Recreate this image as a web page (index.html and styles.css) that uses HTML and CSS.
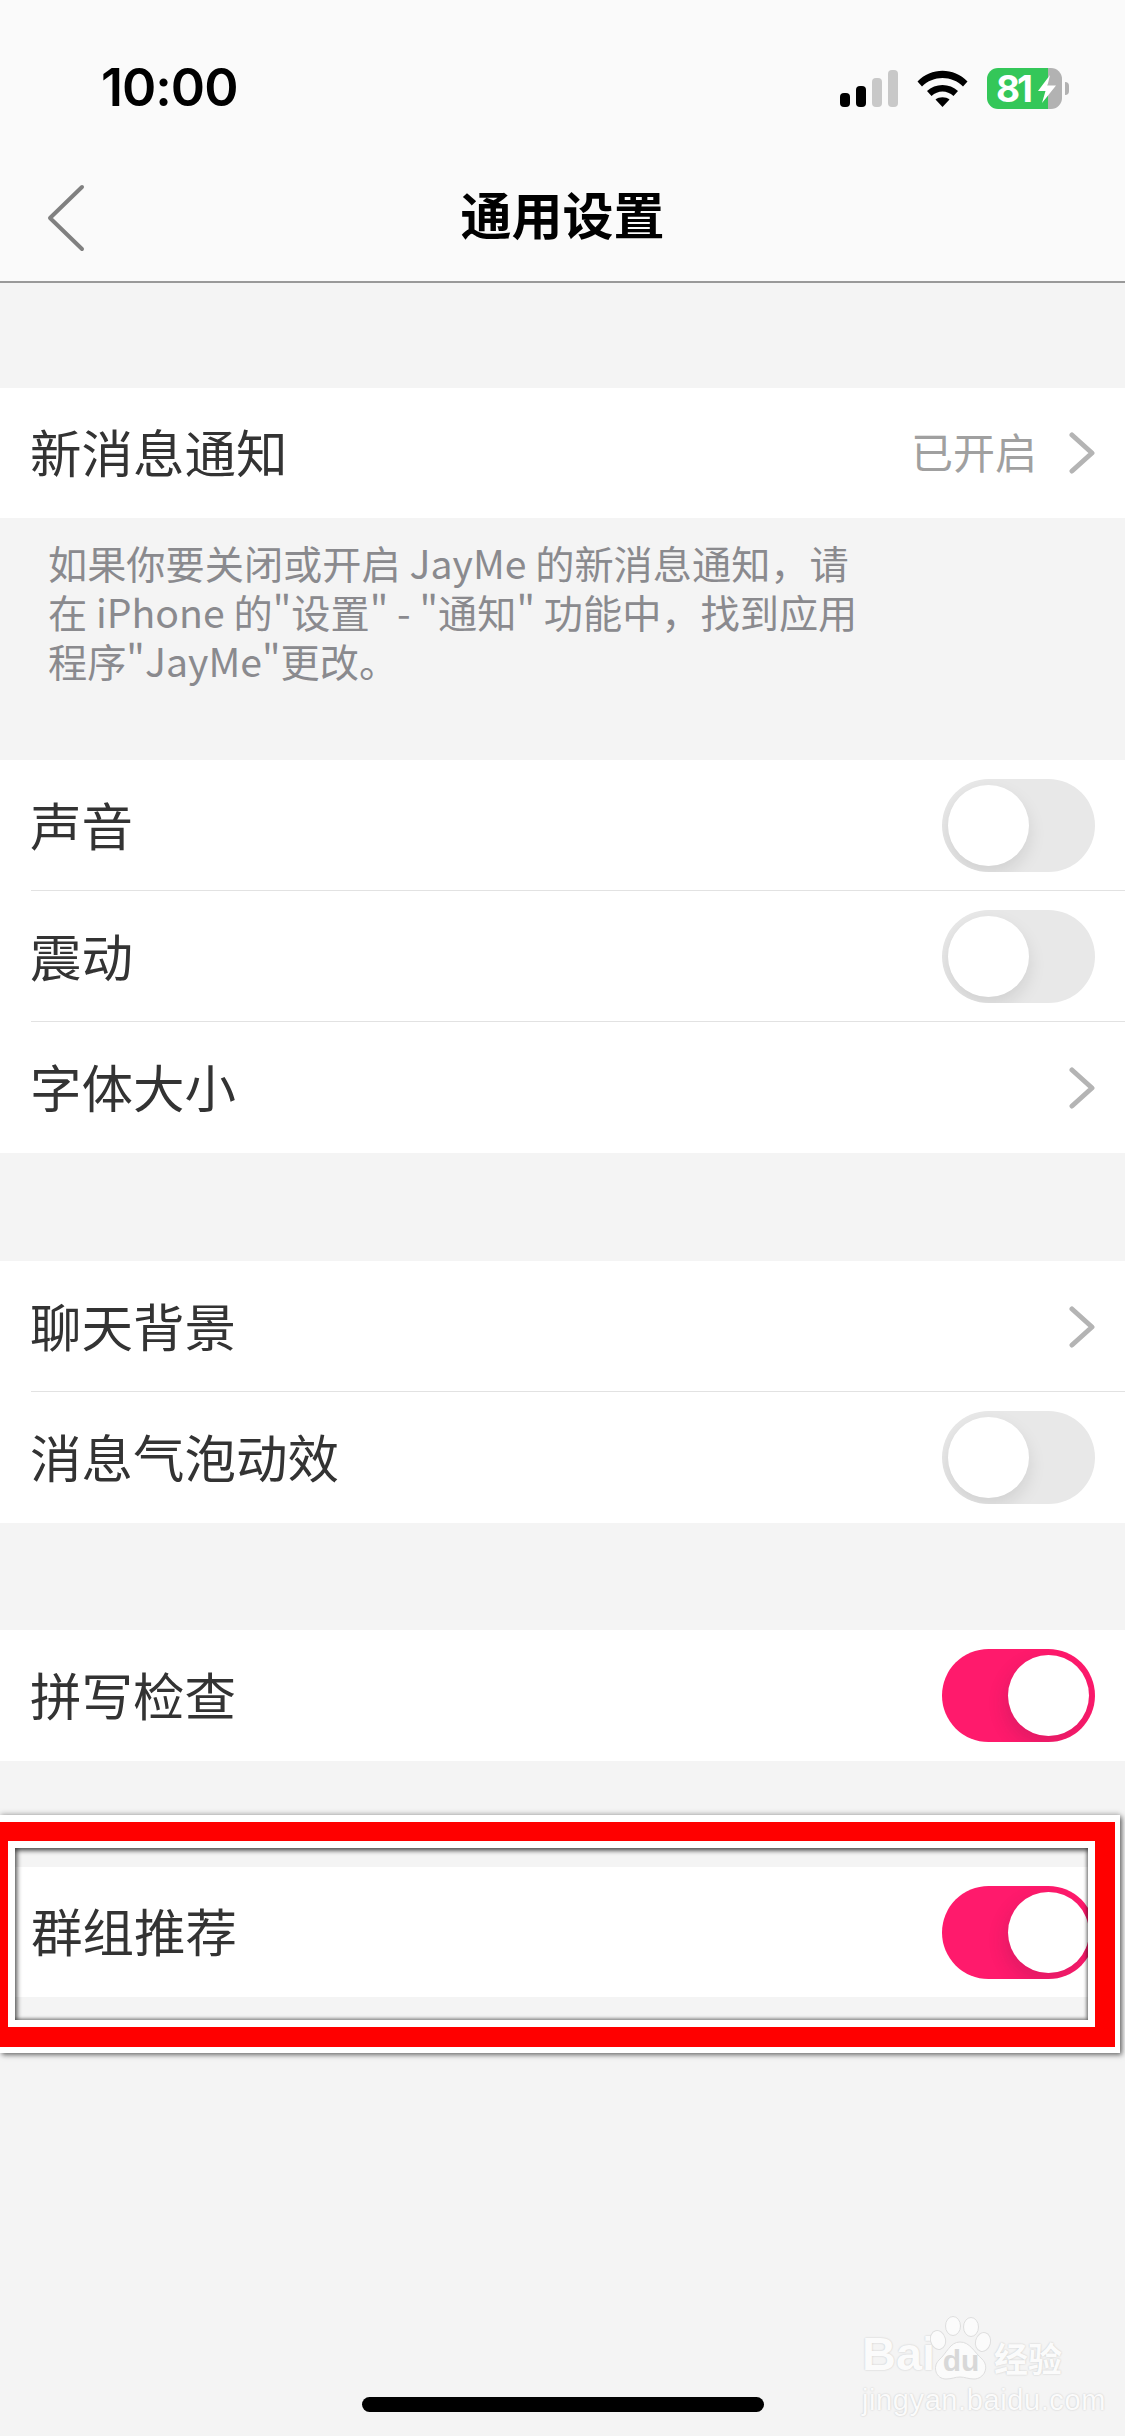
FILE: index.html
```html
<!DOCTYPE html>
<html lang="zh-CN">
<head>
<meta charset="utf-8">
<title>通用设置</title>
<link rel="stylesheet" href="styles.css">
</head>
<body>
<div class="phone">
  <header class="header">
    <div class="status">
      <span class="time">10:00</span>
      <div class="status-icons">
        <svg class="signal" width="58" height="37" viewBox="0 0 58 37"><rect x="0" y="23" width="10" height="14" rx="4" fill="#000"/><rect x="16" y="16" width="10" height="21" rx="4" fill="#000"/><rect x="32" y="8" width="10" height="29" rx="4" fill="#c8c8c8"/><rect x="48" y="0" width="10" height="37" rx="4" fill="#c8c8c8"/></svg>
        <svg class="wifi" width="51" height="37" viewBox="0 0 51 37"><path d="M0.5 11.5C14 -3 37 -3 50.5 11.5L46 16.5C35 5 16 5 5 16.5Z" fill="#000"/><path d="M10 21C18 13 33 13 41 21L36.5 26C30 20 21 20 14.5 26Z" fill="#000"/><path d="M18.5 29.5C22 26.5 29 26.5 32.5 29.5L25.5 37Z" fill="#000"/></svg>
        <div class="battery">
          <div class="battery-body">
            <span class="battery-num">81</span>
            <svg class="bolt" width="18" height="28" viewBox="0 0 18 28"><path d="M12 0L0 16H7.5L4 28L18 10.5H9.5Z" fill="#fff"/></svg>
          </div>
          <span class="battery-nub"></span>
        </div>
      </div>
    </div>
    <div class="nav">
      <svg class="back" width="38" height="68" viewBox="0 0 38 68"><path d="M35 3L3 34L35 65" fill="none" stroke="#808080" stroke-width="4" stroke-linejoin="round" stroke-linecap="round"/></svg>
      <h1 class="title">通用设置</h1>
    </div>
  </header>

  <main class="content">
    <section class="group group-first">
      <div class="row row-short">
        <span class="label">新消息通知</span>
        <span class="value">已开启</span>
        <svg class="chevron" width="26" height="42" viewBox="0 0 26 42"><path d="M3 3L23 21L3 39" fill="none" stroke="#b4b4b4" stroke-width="5" stroke-linecap="round" stroke-linejoin="round"/></svg>
      </div>
    </section>

    <p class="note">如果你要关闭或开启 JayMe 的新消息通知，请<br>在 iPhone 的"设置" - "通知" 功能中，找到应用<br>程序"JayMe"更改。</p>

    <section class="group">
      <div class="row"><span class="label">声音</span><span class="toggle"><span class="knob"></span></span></div>
      <div class="row"><span class="label">震动</span><span class="toggle"><span class="knob"></span></span></div>
      <div class="row"><span class="label">字体大小</span><svg class="chevron" width="26" height="42" viewBox="0 0 26 42"><path d="M3 3L23 21L3 39" fill="none" stroke="#b4b4b4" stroke-width="5" stroke-linecap="round" stroke-linejoin="round"/></svg></div>
    </section>

    <section class="group group-gap">
      <div class="row"><span class="label">聊天背景</span><svg class="chevron" width="26" height="42" viewBox="0 0 26 42"><path d="M3 3L23 21L3 39" fill="none" stroke="#b4b4b4" stroke-width="5" stroke-linecap="round" stroke-linejoin="round"/></svg></div>
      <div class="row"><span class="label">消息气泡动效</span><span class="toggle"><span class="knob"></span></span></div>
    </section>

    <section class="group group-gap-last">
      <div class="row"><span class="label">拼写检查</span><span class="toggle toggle-on"><span class="knob"></span></span></div>
    </section>

    <div class="mark-outer">
      <div class="mark-red">
        <div class="mark-white">
          <div class="mark-shot">
            <div class="row row-marked"><span class="label">群组推荐</span><span class="toggle toggle-on toggle-clipped"><span class="knob"></span></span></div>
          </div>
        </div>
      </div>
    </div>
  </main>

  <div class="watermark">
    <div class="wm-top">
      <span class="wm-bai">Bai</span>
      <span class="wm-paw">
        <svg width="62" height="64" viewBox="0 0 62 64">
          <g fill="#fbfbfb" stroke="#dedede" stroke-width="1">
            <ellipse cx="23" cy="10" rx="7.5" ry="9.5"/>
            <ellipse cx="41" cy="11" rx="7.5" ry="9.5"/>
            <ellipse cx="8" cy="24" rx="7.5" ry="9.5" transform="rotate(-15 8 24)"/>
            <ellipse cx="53" cy="26" rx="7.5" ry="9.5" transform="rotate(15 53 26)"/>
            <path d="M30 26C40 26 44 36 52 43C60 51 54 63 44 63C38 63 35 61 30 61C25 61 22 63 16 63C6 63 2 51 9 44C17 37 20 26 30 26Z"/>
          </g>
        </svg>
        <span class="wm-du">du</span>
      </span>
      <span class="wm-cn">经验</span>
    </div>
    <div class="wm-url">jingyan.baidu.com</div>
  </div>

  <div class="home-bar"></div>
</div>
</body>
</html>
```

FILE: styles.css
```css
* { box-sizing: border-box; }
html, body { margin: 0; padding: 0; }
body { background: #f4f4f4; font-family: "Noto Sans CJK SC", "Inter", sans-serif; }

.phone { position: relative; width: 1125px; height: 2436px; overflow: hidden; background: #f4f4f4; }

.header { height: 283px; background: #fafafa; border-bottom: 2px solid #999; display: flex; flex-direction: column; }
.status { height: 177px; display: flex; align-items: flex-start; justify-content: space-between; padding: 57px 56px 0 101px; }
.time { font-family: "Inter", sans-serif; font-weight: 600; font-size: 52px; line-height: 62px; letter-spacing: -1px; color: #000; }
.status-icons { display: flex; align-items: flex-start; padding-top: 13px; }
.signal { display: block; margin-right: 19px; }
.wifi { display: block; margin-right: 19px; }
.battery { display: flex; align-items: center; margin-top: -2px; }
.battery-body { width: 75px; height: 41px; border-radius: 11px; background: linear-gradient(90deg, #34c759 0, #34c759 61px, #b2b2b2 61px); display: flex; align-items: center; padding-left: 9px; position: relative; }
.battery-num { font-family: "Inter", sans-serif; font-weight: 700; font-size: 37px; line-height: 41px; color: #fff; letter-spacing: -3px; }
.bolt { position: absolute; left: 51px; top: 7px; }
.battery-nub { display: block; width: 4px; height: 13px; margin-left: 3px; background: #b2b2b2; border-radius: 0 5px 5px 0; }

.nav { position: relative; flex: 1; display: flex; align-items: center; justify-content: center; padding-bottom: 33px; }
.back { position: absolute; left: 47px; top: 7px; }
.title { margin: 0; font-size: 51px; line-height: 64px; font-weight: 700; color: #000; }

.content { display: flex; flex-direction: column; align-items: flex-start; }
.group { width: 100%; background: #fff; }
.group-first { margin-top: 105px; }
.group-gap { margin-top: 108px; }
.group-gap-last { margin-top: 107px; }
.row { position: relative; height: 131px; padding: 0 30px; display: flex; align-items: center; }
.row + .row::before { content: ""; position: absolute; left: 31px; right: 0; top: -1px; height: 1px; background: #e2e2e2; }
.row-short { height: 130px; }
.label { flex: 1; font-size: 51.5px; line-height: 64px; margin-top: -4px; color: #333; }
.value { font-size: 42px; line-height: 52px; margin-top: -4px; color: #a0a0a0; margin-right: 32px; }
.chevron { display: block; }

.toggle { position: relative; display: block; width: 153px; height: 93px; border-radius: 47px; background: #e8e8e8; overflow: hidden; flex: none; }
.knob { position: absolute; left: 6px; top: 6px; width: 81px; height: 81px; border-radius: 50%; background: #fff; box-shadow: 0 8px 18px rgba(0, 0, 0, .1); }
.toggle-on { background: #ff1a6c; }
.toggle-on .knob { left: 66px; box-shadow: -3px 8px 18px rgba(60, 30, 60, .16); }
.toggle-clipped { margin-right: -7px; }

.note { width: 100%; margin: 0; height: 242px; padding: 20px 0 0 48px; font-size: 39.2px; line-height: 49px; color: #8a8a8e; }

.mark-outer { margin-top: 54px; width: 1120px; padding: 7px 5px 6px 0; background: #fff; box-shadow: 2px 2px 5px rgba(0, 0, 0, .55), 0 -2px 5px rgba(0, 0, 0, .15); }
.mark-red { background: #f00; padding: 19px 20px 20px 8px; }
.mark-white { background: #fff; padding: 7px; }
.mark-shot { position: relative; background: #f4f4f4; padding: 19px 0 23px; overflow: hidden; }
.mark-shot::after { content: ""; position: absolute; inset: 0; box-shadow: inset 0 3px 4px rgba(0, 0, 0, .55), inset 3px 0 4px rgba(0, 0, 0, .4), inset -2px -2px 3px rgba(0, 0, 0, .22); }
.row-marked { height: 130px; padding: 0 0 0 16px; background: #fff; }

.watermark { position: absolute; left: 862px; top: 2316px; width: 204px; color: #fbfbfb; text-shadow: 0 0 2px rgba(0, 0, 0, .2); font-family: "Liberation Sans", sans-serif; }
.wm-top { display: flex; align-items: flex-end; height: 64px; }
.wm-bai { font-size: 47px; line-height: 52px; font-weight: 700; width: 68px; }
.wm-paw { position: relative; display: block; width: 62px; height: 64px; }
.wm-paw svg { display: block; }
.wm-du { position: absolute; left: 12px; top: 30px; width: 38px; text-align: center; font-size: 30px; line-height: 30px; color: #d8d8d8; text-shadow: none; font-weight: 700; }
.wm-cn { font-family: "Noto Sans CJK SC", sans-serif; font-size: 34px; line-height: 44px; font-weight: 700; white-space: nowrap; margin-left: 2px; }
.wm-url { font-size: 29px; line-height: 36px; letter-spacing: .6px; margin-top: 2px; white-space: nowrap; }

.home-bar { position: absolute; left: 362px; top: 2397px; width: 402px; height: 15px; border-radius: 8px; background: #000; }
```
